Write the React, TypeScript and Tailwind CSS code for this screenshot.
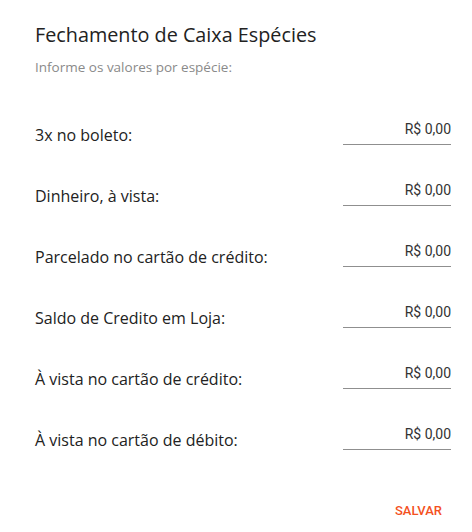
const FONT_LABEL = "font-['Open_Sans','Noto_Sans',sans-serif]";

const ROWS = [
  "3x no boleto:",
  "Dinheiro, à vista:",
  "Parcelado no cartão de crédito:",
  "Saldo de Credito em Loja:",
  "À vista no cartão de crédito:",
  "À vista no cartão de débito:",
];

export default function App() {
  return (
    <div className="min-h-[532px] w-[472px] bg-white pl-[35px] pr-[21px] pt-[21px]">
      <h2 className={`${FONT_LABEL} text-[19.8px] leading-[28px] text-[#222]`}>
        Fechamento de Caixa Espécies
      </h2>
      <p className={`${FONT_LABEL} mt-[9px] text-[13.5px] leading-[18px] text-[#8a8a8a]`}>
        Informe os valores por espécie:
      </p>

      <div className="mt-[8px] flex flex-col">
        {ROWS.map((label) => (
          <div key={label} className="flex h-[61px] items-end justify-between">
            <span className={`${FONT_LABEL} text-[16px] leading-[20px] text-[#222]`}>{label}</span>
            <div className="w-[108px] border-b border-[#8f8f8f] pb-[5px] text-right font-['Roboto',sans-serif] text-[14px] leading-[20px] text-[#333]">
              R$ 0,00
            </div>
          </div>
        ))}
      </div>

      <div className="mt-[43px] flex justify-end">
        <button className="h-[36px] px-[9px] font-['Roboto',sans-serif] text-[13px] font-medium uppercase text-[#f4511e]">
          Salvar
        </button>
      </div>
    </div>
  );
}
